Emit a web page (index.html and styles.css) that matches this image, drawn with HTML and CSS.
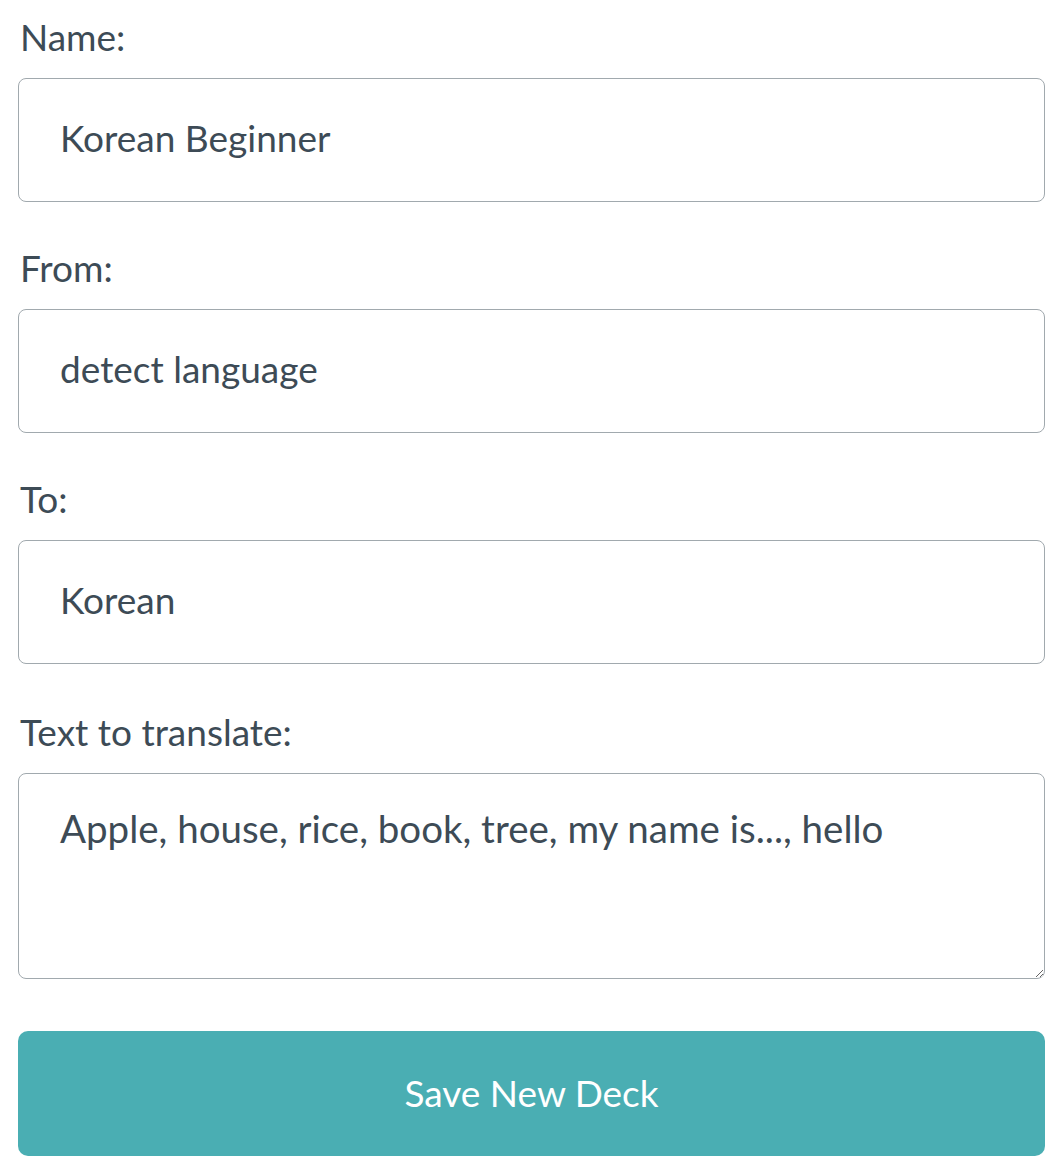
FILE: index.html
```html
<!DOCTYPE html>
<html lang="en">
<head>
<meta charset="utf-8">
<title>New Deck</title>
<link rel="stylesheet" href="styles.css">
</head>
<body>
<form class="deck-form">
  <div class="field">
    <label class="field-label" for="name">Name:</label>
    <input class="field-input" id="name" type="text" value="Korean Beginner">
  </div>
  <div class="field">
    <label class="field-label" for="from">From:</label>
    <input class="field-input" id="from" type="text" value="detect language">
  </div>
  <div class="field">
    <label class="field-label" for="to">To:</label>
    <input class="field-input" id="to" type="text" value="Korean">
  </div>
  <div class="field field-last">
    <label class="field-label" for="text">Text to translate:</label>
    <textarea class="field-textarea" id="text">Apple, house, rice, book, tree, my name is..., hello</textarea>
  </div>
  <button class="save-btn" type="button">Save New Deck</button>
</form>
</body>
</html>
```
FILE: styles.css
```css
html, body {
  margin: 0;
  padding: 0;
  background: #ffffff;
}
body {
  font-family: Lato, "Open Sans", sans-serif;
  color: #3d4b56;
}
.deck-form {
  display: flex;
  flex-direction: column;
  padding: 14px 17px 0 18px;
}
.field {
  display: flex;
  flex-direction: column;
  margin-bottom: 43px;
}
.field-last {
  margin-top: 2px;
  margin-bottom: 52px;
}
.field-label {
  font-size: 37px;
  line-height: 46px;
  margin: 0 0 18px 2px;
}
.field-input,
.field-textarea {
  box-sizing: border-box;
  width: 100%;
  border: 1.5px solid #a1a9ae;
  border-radius: 8px;
  font-family: inherit;
  font-size: 37px;
  color: #3d4b56;
  padding: 0 41px;
  background: #fff;
  outline: none;
}
.field-input {
  height: 124px;
  padding-bottom: 6px;
}
.field-textarea {
  height: 206px;
  padding-top: 30px;
  font-size: 38.5px;
  line-height: 48px;
  resize: vertical;
}
.save-btn {
  height: 125px;
  border: none;
  border-radius: 10px;
  background: #4aaeb3;
  color: #fff;
  font-family: inherit;
  font-size: 37px;
  padding-bottom: 4px;
}
```
